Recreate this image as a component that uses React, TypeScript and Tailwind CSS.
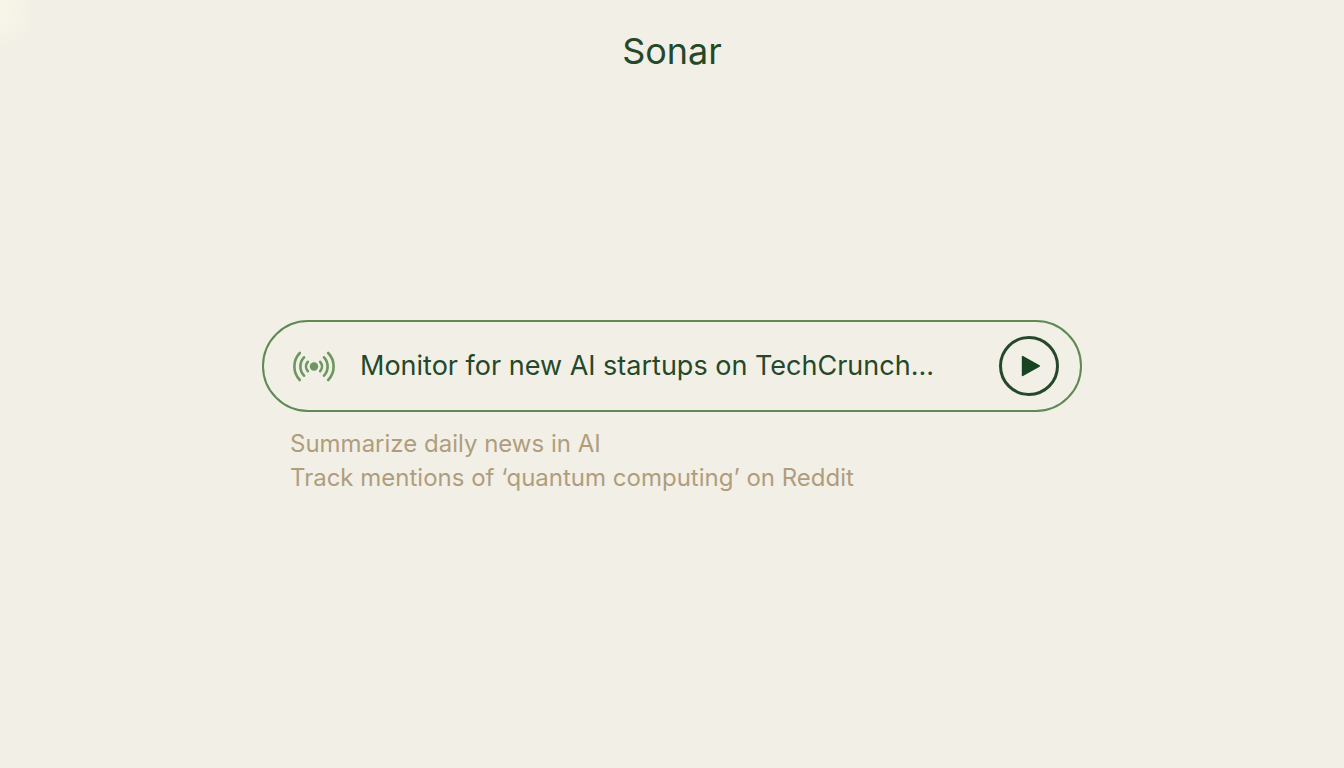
import { useState } from "react";

const SUGGESTIONS = [
  "Summarize daily news in AI",
  "Track mentions of ‘quantum computing’ on Reddit",
];

function SonarIcon() {
  return (
    <svg
      viewBox="0 0 44 32"
      className="h-8 w-11 shrink-0 text-[#6c9760]"
      fill="none"
      stroke="currentColor"
      strokeWidth="2.6"
      strokeLinecap="round"
      aria-hidden="true"
    >
      <circle cx="22" cy="16.5" r="4.2" fill="currentColor" stroke="none" />
      <path d="M15.8 11.8a7.2 7.2 0 0 0 0 9.4" />
      <path d="M28.2 11.8a7.2 7.2 0 0 1 0 9.4" />
      <path d="M12 7.3a13.5 13.5 0 0 0 0 18.4" />
      <path d="M32 7.3a13.5 13.5 0 0 1 0 18.4" />
      <path d="M7.8 3a19.5 19.5 0 0 0 0 27" />
      <path d="M36.2 3a19.5 19.5 0 0 1 0 27" />
    </svg>
  );
}

function PlayIcon() {
  return (
    <svg viewBox="0 0 20 22" className="ml-1 h-[22px] w-5" aria-hidden="true">
      <path
        d="M1.6 1.6v18.8l16.6-9.4z"
        fill="currentColor"
        stroke="currentColor"
        strokeWidth="1.6"
        strokeLinejoin="round"
      />
    </svg>
  );
}

export default function App() {
  const [query, setQuery] = useState("");

  return (
    <div className="min-h-screen bg-[#f2f0e6] bg-[radial-gradient(circle_at_0_12px,#f8f5e8_0,#f2f0e6_36px)] px-6 font-['Inter',sans-serif] text-[#25482b]">
      <header className="pt-7 text-center">
        <h1 className="text-4xl leading-[46px]">Sonar</h1>
      </header>

      <main className="mx-auto mt-[246px] max-w-[820px]">
        <form
          onSubmit={(e) => e.preventDefault()}
          className="flex h-[92px] items-center rounded-full border-2 border-[#5f8a54] pr-[21px] pl-7"
        >
          <SonarIcon />
          <input
            type="text"
            value={query}
            onChange={(e) => setQuery(e.target.value)}
            placeholder="Monitor for new AI startups on TechCrunch..."
            aria-label="What to monitor"
            className="mx-6 min-w-0 flex-1 bg-transparent text-[27px] leading-9 outline-none placeholder:text-[#25482b]"
          />
          <button
            type="submit"
            aria-label="Start monitoring"
            className="flex size-[60px] shrink-0 items-center justify-center rounded-full border-3 border-[#25482b] text-[#174423]"
          >
            <PlayIcon />
          </button>
        </form>

        <ul className="mt-[15px] pl-7 text-2xl leading-[34px] text-[#b09d7d]">
          {SUGGESTIONS.map((suggestion) => (
            <li key={suggestion}>
              <button
                type="button"
                onClick={() => setQuery(suggestion)}
                className="block text-left"
              >
                {suggestion}
              </button>
            </li>
          ))}
        </ul>
      </main>
    </div>
  );
}
